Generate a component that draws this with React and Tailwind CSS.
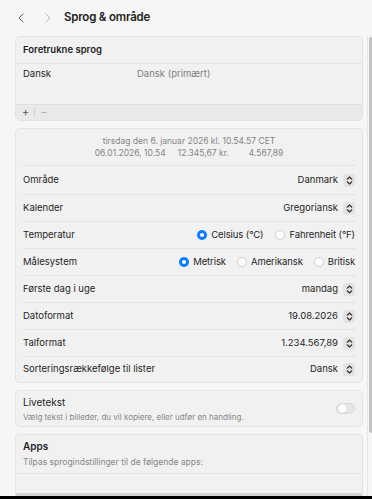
import { ChevronLeft, ChevronRight } from 'lucide-react';

function Stepper() {
  return (
    <span className="ml-[5px] flex h-[13px] w-[12px] items-center justify-center rounded-[3px] bg-[#e3e3e3]">
      <svg width="7" height="9" viewBox="0 0 7 9" fill="none" stroke="#333" strokeWidth="1.2" strokeLinecap="round" strokeLinejoin="round">
        <path d="M1.2 3.2 3.5 1 5.8 3.2" />
        <path d="M1.2 5.8 3.5 8 5.8 5.8" />
      </svg>
    </span>
  );
}

function Radio({ checked, label }) {
  return (
    <span className="flex items-center gap-[4px]">
      {checked ? (
        <span className="flex h-[10px] w-[10px] items-center justify-center rounded-full bg-[#0a7cff]">
          <span className="h-[4px] w-[4px] rounded-full bg-white" />
        </span>
      ) : (
        <span className="h-[10px] w-[10px] rounded-full border border-[#cfcfcf] bg-white" />
      )}
      <span className="tracking-[-0.1px]">{label}</span>
    </span>
  );
}

function SelectRow({ label, value, h = 'h-[27px]' }) {
  return (
    <div className={`flex items-center justify-between border-t border-[#e2e2e2] ${h}`}>
      <span>{label}</span>
      <span className="flex items-center">
        {value}
        <Stepper />
      </span>
    </div>
  );
}

export default function App() {
  return (
    <div className="relative flex h-[499px] w-[372px] flex-col overflow-hidden bg-[#f6f6f6] font-['Inter',sans-serif] text-[9.5px] text-[#1f1f1f]">
      <div className="flex h-[36px] shrink-0 items-center">
        <ChevronLeft className="ml-[13px] text-[#4a4a4a]" size={16} strokeWidth={1.4} />
        <ChevronRight className="ml-[11px] text-[#b4b4b4]" size={16} strokeWidth={1.4} />
        <span className="ml-[8px] text-[11.5px] font-semibold tracking-[-0.2px] text-[#222]">Sprog &amp; område</span>
      </div>

      <div className="flex min-h-0 flex-1">
        <div className="flex w-[363px] shrink-0 flex-col gap-[7px] pl-[15px]">
          {/* Foretrukne sprog */}
          <div className="overflow-hidden rounded-[5px] border border-[#e3e3e3] bg-[#f1f1f1]">
            <div className="flex h-[26px] items-center px-[7px] font-semibold">Foretrukne sprog</div>
            <div className="h-[41px] border-t border-[#e2e2e2] px-[7px] pt-[3px]">
              <div className="flex">
                <span className="w-[114px]">Dansk</span>
                <span className="text-[#7f7f7f]">Dansk (primært)</span>
              </div>
            </div>
            <div className="flex h-[16px] items-center border-t border-[#e0e0e0] bg-[#e9e9e9] px-[6px] text-[#555]">
              <span className="text-[11px] leading-none">+</span>
              <span className="mx-[5px] h-[9px] w-px bg-[#d2d2d2]" />
              <span className="text-[11px] leading-none text-[#b5b5b5]">−</span>
            </div>
          </div>

          {/* Område */}
          <div className="shrink-0 rounded-[5px] border border-[#e3e3e3] bg-[#f1f1f1] px-[7px]">
            <div className="flex h-[36px] flex-col items-center justify-center gap-[2px] text-[8.5px] leading-[10px] text-[#858585]">
              <span>tirsdag den 6. januar 2026 kl. 10.54.57 CET</span>
              <span className="flex">
                <span>06.01.2026, 10.54</span>
                <span className="ml-[12px]">12.345,67 kr.</span>
                <span className="ml-[20px]">4.567,89</span>
              </span>
            </div>
            <SelectRow h="h-[29px]" label="Område" value="Danmark" />
            <SelectRow label="Kalender" value="Gregoriansk" />
            <div className="flex h-[27px] items-center justify-between border-t border-[#e2e2e2]">
              <span>Temperatur</span>
              <span className="flex items-center gap-[12px]">
                <Radio checked label="Celsius (°C)" />
                <Radio label="Fahrenheit (°F)" />
              </span>
            </div>
            <div className="flex h-[27px] items-center justify-between border-t border-[#e2e2e2]">
              <span>Målesystem</span>
              <span className="flex items-center gap-[11px]">
                <Radio checked label="Metrisk" />
                <Radio label="Amerikansk" />
                <Radio label="Britisk" />
              </span>
            </div>
            <SelectRow label="Første dag i uge" value="mandag" />
            <SelectRow label="Datoformat" value="19.08.2026" />
            <SelectRow label="Talformat" value="1.234.567,89" />
            <SelectRow h="h-[26px]" label="Sorteringsrækkefølge til lister" value="Dansk" />
          </div>

          {/* Livetekst */}
          <div className="flex h-[37px] shrink-0 items-center justify-between rounded-[5px] border border-[#e3e3e3] bg-[#f1f1f1] px-[7px]">
            <div className="flex flex-col gap-[1px]">
              <span className="text-[10px]">Livetekst</span>
              <span className="text-[8px] text-[#878787]">Vælg tekst i billeder, du vil kopiere, eller udfør en handling.</span>
            </div>
            <span className="flex h-[11px] w-[19px] items-center rounded-full border border-[#d9d9d9] bg-[#e6e6e6] p-[1px]">
              <span className="h-[9px] w-[9px] rounded-full bg-white shadow-[0_0_1px_rgba(0,0,0,0.3)]" />
            </span>
          </div>

          {/* Apps */}
          <div className="flex min-h-0 flex-1 flex-col overflow-hidden rounded-t-[5px] border border-b-0 border-[#e3e3e3] bg-[#f1f1f1]">
            <div className="flex h-[38px] shrink-0 flex-col justify-center gap-[2px] px-[7px]">
              <span className="text-[10px] font-semibold">Apps</span>
              <span className="text-[8.5px] text-[#878787]">Tilpas sprogindstillinger til de følgende apps:</span>
            </div>
            <div className="flex-1 border-t border-[#e2e2e2]" />
            <div className="h-[3px] shrink-0 bg-[#d6d6d6]" />
          </div>
        </div>

        {/* scrollbar */}
        <div className="ml-[4px] flex flex-1 border-l border-[#e6e6e6]">
          <div className="ml-[1px] mt-[1px] h-[396px] w-[4px] rounded-full bg-[#c4c4c4]" />
        </div>
      </div>

      <div className="h-[3px] shrink-0 bg-black" />
    </div>
  );
}
